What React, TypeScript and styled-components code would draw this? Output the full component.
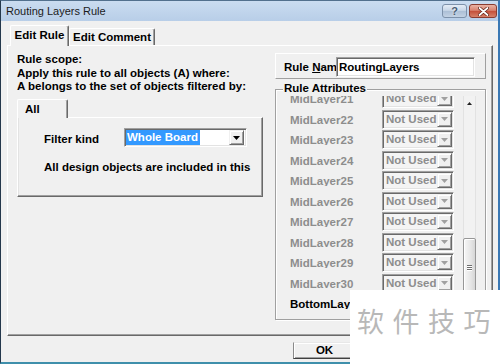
import React from "react";
import styled, { createGlobalStyle } from "styled-components";

const font = `"Liberation Sans", Arial, sans-serif`;

const GlobalStyle = createGlobalStyle`
  html, body { margin: 0; padding: 0; }
  body { background: #f0f0f0; font-family: ${font}; overflow: hidden; }
  * { box-sizing: border-box; }
`;

const Screen = styled.div`
  position: relative;
  width: 500px;
  height: 364px;
  overflow: hidden;
`;

const Window = styled.div`
  width: 500px;
  height: 364px;
  display: flex;
  flex-direction: column;
  background: #f0f0f0;
  border-top: 1px solid #52708d;
  border-left: 1px solid #24384c;
  border-right: 2px solid #3a78b4;
  border-bottom: 2px solid #3f8fab;
`;

const TitleBar = styled.div`
  height: 20px;
  flex: none;
  display: flex;
  align-items: flex-start;
  padding: 0 1px 0 5px;
  background: linear-gradient(#cadcf0, #b8cee8);
`;

const Title = styled.span`
  font-family: ${font};
  font-size: 11px;
  line-height: 21px;
  color: #1b1b1b;
`;

const CaptionButtons = styled.div`
  margin-left: auto;
  margin-top: 3px;
  display: flex;
  gap: 2px;
`;

const HelpButton = styled.div`
  width: 25px;
  height: 14px;
  border: 1px solid #7d91aa;
  border-radius: 3px;
  background: linear-gradient(#e4ecf6 0%, #c8d6e7 45%, #acbfd6 52%, #c3d2e4 100%);
  display: flex;
  align-items: center;
  justify-content: center;
  font: bold 11px ${font};
  color: #4a5d74;
  text-shadow: 0 0 2px #fff;
`;

const CloseButton = styled.div`
  width: 28px;
  height: 14px;
  border: 1px solid #8a3c30;
  border-radius: 3px;
  background: linear-gradient(#eab3a4 0%, #d8826f 45%, #c4503a 52%, #d6826a 100%);
  display: flex;
  align-items: center;
  justify-content: center;
`;

const Body = styled.div`
  flex: 1;
  display: flex;
  flex-direction: column;
  padding: 4px 0 0 6px;
`;

const TabStrip = styled.div`
  display: flex;
  align-items: flex-end;
  height: 20px;
  padding-left: 3px;
  position: relative;
  z-index: 1;
`;

const Tab = styled.div<{ $active?: boolean; $w: number }>`
  width: ${(p) => p.$w}px;
  height: ${(p) => (p.$active ? 21 : 17)}px;
  margin-bottom: ${(p) => (p.$active ? -1 : 0)}px;
  background: #f0f0f0;
  border-top: 1px solid #fff;
  border-left: 1px solid #fff;
  border-right: 1px solid #696969;
  border-top-left-radius: 2px;
  border-top-right-radius: 2px;
  box-shadow: inset -1px 0 #a0a0a0;
  font: bold 11.5px/13px ${font};
  color: #000;
  display: flex;
  align-items: center;
  justify-content: center;
  padding-bottom: ${(p) => (p.$active ? 1 : 0)}px;
  white-space: nowrap;
`;

const TabPage = styled.div`
  width: 486px;
  height: 291px;
  border: 1px solid;
  border-color: #fff #696969 #696969 #fff;
  box-shadow: inset -1px -1px #a0a0a0;
  display: grid;
  grid-template-columns: 246px 211px;
  column-gap: 12px;
  align-items: start;
  padding: 7px 0 0 9px;
`;

const Text = styled.div<{ $gray?: boolean }>`
  font: bold 11.5px/13.5px ${font};
  color: ${(p) => (p.$gray ? "#8d8d8d" : "#000")};
  white-space: nowrap;
`;

const LeftColumn = styled.div`
  display: flex;
  flex-direction: column;
`;

const SubTabs = styled.div`
  margin-top: 5.5px;
  display: flex;
  flex-direction: column;
`;

const SubTabStrip = styled.div`
  display: flex;
  align-items: flex-end;
  height: 18px;
  position: relative;
  z-index: 1;
`;

const SubTab = styled.div`
  width: 51px;
  height: 19px;
  margin-bottom: -1px;
  background: #f0f0f0;
  border-top: 1px solid #fff;
  border-left: 1px solid #fff;
  border-right: 1px solid #696969;
  border-top-left-radius: 2px;
  border-top-right-radius: 2px;
  box-shadow: inset -1px 0 #a0a0a0;
  font: bold 11.5px/13px ${font};
  padding: 3px 0 0 7px;
`;

const SubPanel = styled.div`
  width: 246px;
  height: 80px;
  border: 1px solid;
  border-color: #fff #696969 #696969 #fff;
  box-shadow: inset -1px -1px #a0a0a0, inset 1px 0 #e3e3e3;
  display: flex;
  flex-direction: column;
`;

const FilterRow = styled.div`
  display: flex;
  align-items: flex-start;
  padding: 10px 0 0 26px;
`;

const FilterLabel = styled(Text)`
  width: 80px;
  margin-top: 5px;
`;

const Combo = styled.div`
  width: 123px;
  height: 19px;
  display: flex;
  align-items: center;
  background: #fff;
  border: 1px solid;
  border-color: #a0a0a0 #fff #fff #a0a0a0;
  box-shadow: inset 1px 1px #696969, inset -1px -1px #e3e3e3;
  padding: 0 2px 0 1px;
`;

const Highlight = styled.span`
  background: #3399ff;
  color: #fff;
  font: bold 11.5px/15px ${font};
  padding: 0 2px 0 1px;
`;

const DropButton = styled.div<{ $disabled?: boolean }>`
  margin-left: auto;
  width: 15px;
  height: 15px;
  flex: none;
  background: #f0f0f0;
  border: 1px solid;
  border-color: #f0f0f0 #696969 #696969 #f0f0f0;
  box-shadow: inset 1px 1px #fff, inset -1px -1px #a0a0a0;
  display: flex;
  align-items: center;
  justify-content: center;
  color: ${(p) => (p.$disabled ? "#a0a0a0" : "#000")};
`;

const AllText = styled(Text)`
  margin-top: 14px;
  padding-left: 26px;
`;

const RightColumn = styled.div`
  display: flex;
  flex-direction: column;
`;

const NamePanel = styled.div`
  height: 26px;
  display: flex;
  align-items: flex-start;
  padding-left: 8px;
  border: 1px solid;
  border-color: #fff #a0a0a0 #a0a0a0 #fff;
`;

const NameLabel = styled(Text)`
  width: 52px;
  margin-top: 7px;
`;

const NameInput = styled.div`
  width: 139px;
  height: 20px;
  margin-top: 3px;
  background: #fff;
  border: 1px solid;
  border-color: #a0a0a0 #fff #fff #a0a0a0;
  box-shadow: inset 1px 1px #696969, inset -1px -1px #e3e3e3;
  padding: 0 0 0 2px;
  font: bold 11.5px/18px ${font};
  color: #000;
  white-space: nowrap;
`;

const GroupBox = styled.div`
  position: relative;
  margin-top: 10px;
  height: 231px;
  border: 1px solid #a0a0a0;
  box-shadow: inset 1px 1px #fff, 1px 1px #fff;
  padding: 6px 0 0 1px;
`;

const GroupLabel = styled(Text)`
  position: absolute;
  top: -7.75px;
  left: 7px;
  padding: 0 1px;
  background: #f0f0f0;
`;

const ListArea = styled.div`
  display: flex;
  height: 222px;
`;

const ListViewport = styled.div`
  width: 186px;
  height: 100%;
  overflow: hidden;
`;

const ListInner = styled.div`
  margin-top: -7.75px;
`;

const Row = styled.div`
  height: 20.5px;
  display: flex;
  align-items: center;
`;

const RowLabel = styled.div<{ $gray?: boolean }>`
  width: 105px;
  height: 10.5px;
  padding-left: 13px;
  overflow: hidden;
  font: bold 11.5px/13px ${font};
  color: ${(p) => (p.$gray ? "#8d8d8d" : "#000")};
  white-space: nowrap;
`;

const Select = styled.div<{ $disabled?: boolean }>`
  width: 72px;
  height: 19px;
  display: flex;
  align-items: center;
  background: ${(p) => (p.$disabled ? "#f4f4f4" : "#fff")};
  border: 1px solid;
  border-color: #a0a0a0 #fff #fff #a0a0a0;
  box-shadow: inset 1px 1px #696969, inset -1px -1px #e3e3e3;
  padding: 0 1px 0 3px;
  font: bold 11.5px/15px ${font};
  color: ${(p) => (p.$disabled ? "#8d8d8d" : "#000")};
  white-space: nowrap;
`;

const ScrollBar = styled.div`
  width: 13px;
  height: 100%;
  display: flex;
  flex-direction: column;
  background: linear-gradient(90deg, #e2e2e2 0 1px, #f2f2f2 1px 12px, #e2e2e2 12px);
`;

const ScrollArrow = styled.div`
  height: 15px;
  flex: none;
  display: flex;
  align-items: center;
  justify-content: center;
`;

const ScrollTrack = styled.div`
  flex: 1;
  display: flex;
  flex-direction: column;
`;

const Thumb = styled.div`
  height: 59px;
  border: 1px solid #979797;
  border-radius: 2px;
  background: linear-gradient(90deg, #f7f7f7, #e6e6e6 60%, #d6d6d6);
  box-shadow: inset 1px 1px #fff;
  display: flex;
  flex-direction: column;
  align-items: center;
  justify-content: center;
  gap: 1px;
`;

const Grip = styled.div`
  width: 5px;
  height: 1px;
  background: #6e6e6e;
  box-shadow: 0 1px #fff;
`;

const Footer = styled.div`
  display: flex;
  padding: 6px 0 0 286px;
`;

const OkButton = styled.div`
  width: 63px;
  height: 17px;
  border: 1px solid;
  border-color: #e8e8e8 #404040 #404040 #8a8a8a;
  box-shadow: inset 1px 1px #fff, inset -1px -1px #a0a0a0;
  display: flex;
  align-items: center;
  justify-content: center;
  font: bold 11.5px/13px ${font};
  color: #000;
`;

const Watermark = styled.div`
  position: absolute;
  right: 0;
  bottom: 0;
  width: 150px;
  height: 74px;
  background: #fff;
  display: flex;
  align-items: center;
  padding: 0 0 14px 7px;
  font-family: "Noto Sans CJK SC", "Noto Sans", sans-serif;
  font-size: 27px;
  letter-spacing: 8.5px;
  color: #b8b8b8;
  white-space: nowrap;
`;

const DownArrow = ({ color = "currentColor" }: { color?: string }) => (
  <svg width="7" height="4" viewBox="0 0 7 4">
    <polygon points="0,0 7,0 3.5,4" fill={color} />
  </svg>
);

const UpArrow = () => (
  <svg width="5" height="3" viewBox="0 0 5 3">
    <polygon points="0,3 5,3 2.5,0" fill="#222" />
  </svg>
);

const layers = [
  ...Array.from({ length: 10 }, (_, i) => ({ name: `MidLayer${21 + i}`, used: false })),
  { name: "BottomLayer", used: true },
];

const thumbOffset = 127;

export default function App() {
  return (
    <Screen>
      <GlobalStyle />
      <Window>
        <TitleBar>
          <Title>Routing Layers Rule</Title>
          <CaptionButtons>
            <HelpButton>?</HelpButton>
            <CloseButton>
              <svg width="11" height="9" viewBox="0 0 11 9">
                <path d="M1.5 1 L9.5 8 M9.5 1 L1.5 8" stroke="#5a1c12" strokeWidth="3.2" strokeLinecap="round" />
                <path d="M1.5 1 L9.5 8 M9.5 1 L1.5 8" stroke="#fff" strokeWidth="1.8" strokeLinecap="round" />
              </svg>
            </CloseButton>
          </CaptionButtons>
        </TitleBar>
        <Body>
          <TabStrip>
            <Tab $active $w={59}>Edit Rule</Tab>
            <Tab $w={86}>Edit Comment</Tab>
          </TabStrip>
          <TabPage>
            <LeftColumn>
              <Text>Rule scope:</Text>
              <Text>Apply this rule to all objects (A) where:</Text>
              <Text>A belongs to the set of objects filtered by:</Text>
              <SubTabs>
                <SubTabStrip>
                  <SubTab>All</SubTab>
                </SubTabStrip>
                <SubPanel>
                  <FilterRow>
                    <FilterLabel>Filter kind</FilterLabel>
                    <Combo>
                      <Highlight>Whole Board</Highlight>
                      <DropButton>
                        <DownArrow />
                      </DropButton>
                    </Combo>
                  </FilterRow>
                  <AllText>All design objects are included in this</AllText>
                </SubPanel>
              </SubTabs>
            </LeftColumn>
            <RightColumn>
              <NamePanel>
                <NameLabel>
                  Rule <u>N</u>am
                </NameLabel>
                <NameInput>RoutingLayers</NameInput>
              </NamePanel>
              <GroupBox>
                <GroupLabel>Rule Attributes</GroupLabel>
                <ListArea>
                  <ListViewport>
                    <ListInner>
                      {layers.map((l) => (
                        <Row key={l.name}>
                          <RowLabel $gray={!l.used}>{l.name}</RowLabel>
                          <Select $disabled={!l.used}>
                            {l.used ? "Used" : "Not Used"}
                            <DropButton $disabled={!l.used}>
                              <DownArrow />
                            </DropButton>
                          </Select>
                        </Row>
                      ))}
                    </ListInner>
                  </ListViewport>
                  <ScrollBar>
                    <ScrollArrow>
                      <UpArrow />
                    </ScrollArrow>
                    <ScrollTrack>
                      <Thumb style={{ marginTop: thumbOffset }}>
                        <Grip />
                        <Grip />
                        <Grip />
                      </Thumb>
                    </ScrollTrack>
                    <ScrollArrow>
                      <DownArrow color="#222" />
                    </ScrollArrow>
                  </ScrollBar>
                </ListArea>
              </GroupBox>
            </RightColumn>
          </TabPage>
          <Footer>
            <OkButton>OK</OkButton>
          </Footer>
        </Body>
      </Window>
      <Watermark>软件技巧</Watermark>
    </Screen>
  );
}
